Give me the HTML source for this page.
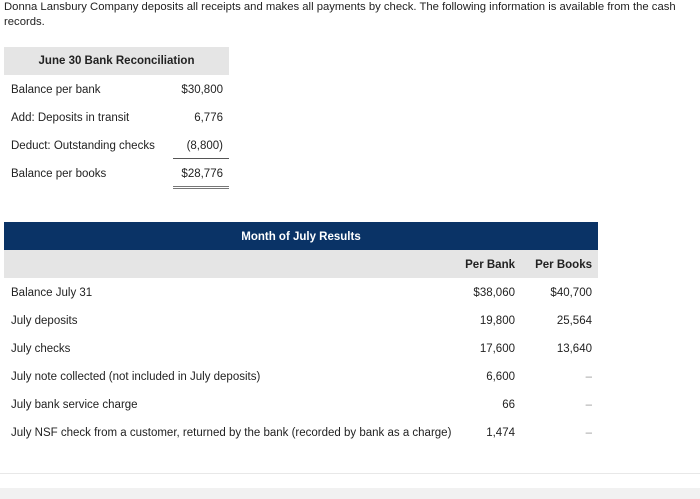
<!DOCTYPE html>
<html><head><style>
body{margin:0;width:700px;height:499px;background:#fff;font-family:"Liberation Sans",sans-serif;color:#222;position:relative;overflow:hidden;font-size:11.5px}
.a{position:absolute;white-space:nowrap;line-height:14px}
.r{text-align:right}
</style></head><body>
<div class="a" style="left:4px;top:0px;width:694px;white-space:normal;line-height:15px;font-size:11.3px">Donna Lansbury Company deposits all receipts and makes all payments by check. The following information is available from the cash records.</div>

<div class="a" style="left:4px;top:47px;width:225px;height:28px;background:#e5e5e5"></div>
<div class="a" style="left:4px;top:54px;width:225px;text-align:center;font-weight:bold">June 30 Bank Reconciliation</div>
<div class="a" style="left:11px;top:83px">Balance per bank</div>
<div class="a" style="left:11px;top:111px">Add: Deposits in transit</div>
<div class="a" style="left:11px;top:139px">Deduct: Outstanding checks</div>
<div class="a" style="left:11px;top:167px">Balance per books</div>
<div class="a r" style="left:150px;width:73px;top:83px">$30,800</div>
<div class="a r" style="left:150px;width:73px;top:111px">6,776</div>
<div class="a r" style="left:150px;width:73px;top:139px">(8,800)</div>
<div class="a r" style="left:150px;width:73px;top:167px">$28,776</div>
<div class="a" style="left:173px;top:158px;width:56px;height:1px;background:#555"></div>
<div class="a" style="left:173px;top:186px;width:56px;height:3px;border-top:1px solid #777;border-bottom:1px solid #777;box-sizing:border-box"></div>

<div class="a" style="left:4px;top:222px;width:594px;height:28px;background:#0a3366"></div>
<div class="a" style="left:4px;top:230px;width:594px;text-align:center;color:#fff;font-weight:bold">Month of July Results</div>
<div class="a" style="left:4px;top:250px;width:594px;height:28px;background:#e5e5e5"></div>
<div class="a r" style="left:440px;width:75px;top:258px;font-weight:bold">Per Bank</div>
<div class="a r" style="left:520px;width:72px;top:258px;font-weight:bold">Per Books</div>

<div class="a" style="left:11px;top:286px">Balance July 31</div>
<div class="a" style="left:11px;top:314px">July deposits</div>
<div class="a" style="left:11px;top:342px">July checks</div>
<div class="a" style="left:11px;top:370px">July note collected (not included in July deposits)</div>
<div class="a" style="left:11px;top:398px">July bank service charge</div>
<div class="a" style="left:11px;top:426px">July NSF check from a customer, returned by the bank (recorded by bank as a charge)</div>

<div class="a r" style="left:440px;width:75px;top:286px">$38,060</div>
<div class="a r" style="left:440px;width:75px;top:314px">19,800</div>
<div class="a r" style="left:440px;width:75px;top:342px">17,600</div>
<div class="a r" style="left:440px;width:75px;top:370px">6,600</div>
<div class="a r" style="left:440px;width:75px;top:398px">66</div>
<div class="a r" style="left:440px;width:75px;top:426px">1,474</div>
<div class="a r" style="left:520px;width:72px;top:286px">$40,700</div>
<div class="a r" style="left:520px;width:72px;top:314px">25,564</div>
<div class="a r" style="left:520px;width:72px;top:342px">13,640</div>
<div class="a r" style="left:520px;width:72px;top:370px;color:#999">–</div>
<div class="a r" style="left:520px;width:72px;top:398px;color:#999">–</div>
<div class="a r" style="left:520px;width:72px;top:426px;color:#999">–</div>

<div class="a" style="left:0;top:473px;width:700px;height:1px;background:#e8e8e8"></div>
<div class="a" style="left:0;top:488px;width:700px;height:11px;background:#f1f1f1"></div>
</body></html>
